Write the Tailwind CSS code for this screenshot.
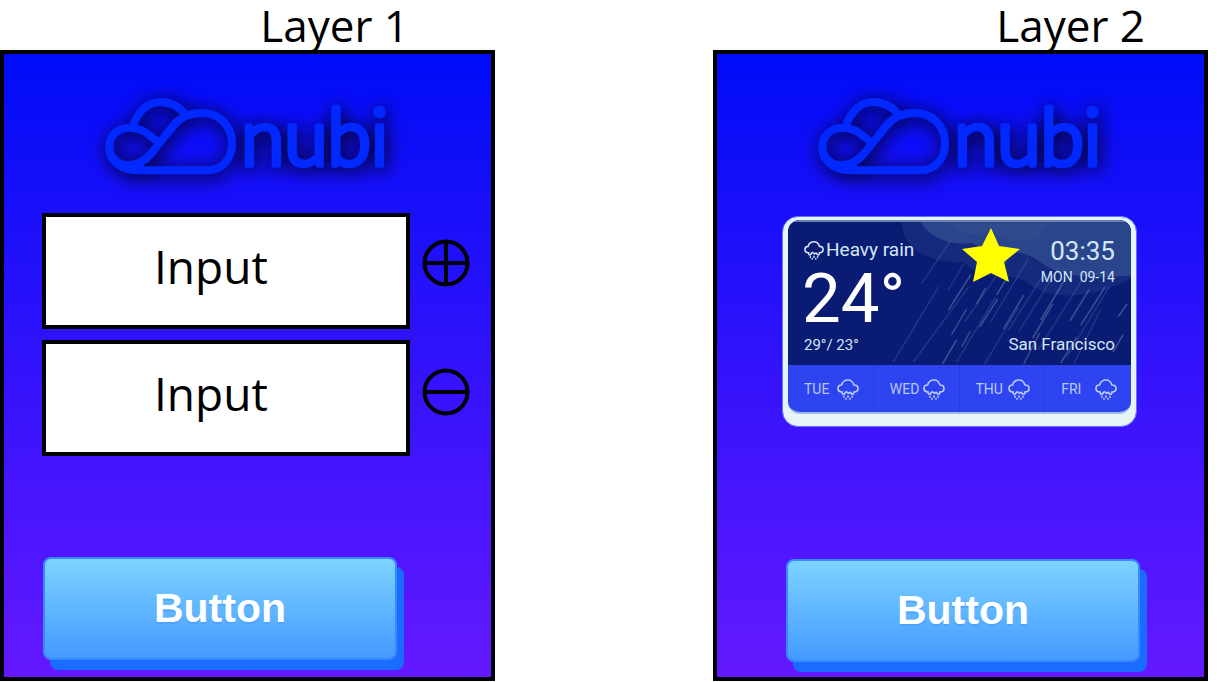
<!DOCTYPE html>
<html lang="en">
<head>
<meta charset="utf-8">
<meta name="viewport" content="width=device-width, initial-scale=1">
<title>nubi</title>
<script src="https://cdn.jsdelivr.net/npm/@tailwindcss/browser@4"></script>
</head>
<body class="bg-white text-black font-['Open_Sans',sans-serif]">
<svg class="hidden" aria-hidden="true">
  <defs>
    <symbol id="logo" viewBox="-7 0 960 330">
      <g fill="none" stroke="#0028ff" stroke-width="24" stroke-linecap="round" stroke-linejoin="round">
        <path d="M150 271H350C398 271 425 235 425 190C425 138 387 99 335 99C297 99 270 112 250 136L188 214C168 240 146 256 115 256C82 256 57 232 57 200C57 167 83 143 118 143C156 143 174 164 200 184"/>
        <path d="M57 200C57 246 92 271 150 271"/>
        <path d="M100 262Q125 266 150 258"/>
        <path d="M128 136C145 91 174 66 210 66C244 66 266 80 284 102"/>
      </g>
      <text x="452" y="255" font-family="Lato, sans-serif" font-weight="300" font-size="236" fill="#0028ff" stroke="#0028ff" stroke-width="17" stroke-linejoin="round">nubi</text>
    </symbol>
    <symbol id="rain" viewBox="0 0 22 22">
      <g fill="none" stroke="currentColor" stroke-width="1.7" stroke-linecap="round">
        <path d="M5 14C2.500 14 1 12.500 1 10.500S2.500 7 4.500 7C5.500 3.500 8 2 11 2S16 4 17 7C19.500 7 21 8.500 21 10.500S19.500 14 17 14"/>
        <path d="M5 14C5 17 7 17 8 15C9 13 10 14 11 15C12 16 13 13 14 15C15 17 17 17 17 14M7 19V18.500M11 18V19M15 19V18.500M9 20.500V21M13 20.500V21"/>
      </g>
    </symbol>
  </defs>
</svg>
<main class="grid min-h-screen grid-cols-[minmax(0,495fr)_minmax(0,218fr)_minmax(0,495fr)] pr-[15px] pb-px">
  <section class="col-start-1 flex flex-col">
    <h2 class="pr-[86px] text-right text-[44px] leading-[50px]">Layer 1</h2>
    <div class="flex flex-1 flex-col border-4 border-black bg-linear-to-b/srgb from-[#000cf8] to-[#6419ff]">
      <svg class="mx-auto mt-[26px] h-[110px] w-[320px] drop-shadow-[2px_3px_9px_#000000]" role="img" aria-label="nubi"><use href="#logo"/></svg>
      <form class="mt-[23px] flex flex-col gap-[11px] pr-[21px] pl-[38px]">
        <div class="flex gap-3">
          <input aria-label="First input" value="Input" class="h-[116px] min-w-0 flex-1 border-4 border-black bg-white pb-[10px] pl-[108px] text-[46px]">
          <button type="button" aria-label="Add" class="mt-[26px] size-12 shrink-0">
            <svg viewBox="0 0 48 48" class="size-12 fill-none stroke-black stroke-4"><circle cx="24" cy="24" r="21.500"/><path d="M24 3V45M3 24H45"/></svg>
          </button>
        </div>
        <div class="flex gap-3">
          <input aria-label="Second input" value="Input" class="h-[116px] min-w-0 flex-1 border-4 border-black bg-white pb-[10px] pl-[108px] text-[46px]">
          <button type="button" aria-label="Remove" class="mt-[28px] size-12 shrink-0">
            <svg viewBox="0 0 48 48" class="size-12 fill-none stroke-black stroke-4"><circle cx="24" cy="24" r="21.500"/><path d="M3 24H45"/></svg>
          </button>
        </div>
      </form>
      <button type="button" class="mt-auto mr-[94px] mb-[17px] ml-[39px] h-[103px] rounded-lg border-2 border-[#378aff] bg-linear-to-b from-[#7dd3ff] to-[#4599ff] font-['Liberation_Sans',sans-serif] text-[41px] font-bold text-white shadow-[7px_10px_0_#1a6cff] text-shadow-[0_2px_0_#4da3ff]">Button</button>
    </div>
  </section>
  <section class="col-start-3 flex flex-col">
    <h2 class="pr-[63px] text-right text-[44px] leading-[50px]">Layer 2</h2>
    <div class="flex flex-1 flex-col border-4 border-black bg-linear-to-b/srgb from-[#000cf8] to-[#6419ff]">
      <svg class="mx-auto mt-[26px] h-[110px] w-[320px] drop-shadow-[2px_3px_9px_#000000]" role="img" aria-label="nubi"><use href="#logo"/></svg>
      <article class="mr-[67px] ml-[65px] mt-[26px] rounded-2xl border border-[#6470ff] bg-[#e5f5f7] px-[5px] pt-[3px] pb-3 font-['Roboto',sans-serif] text-[#d3e7f7]">
        <div class="overflow-hidden rounded-xl border-b-2 border-[#9eb8e5] bg-[#2d44f0]">
          <div class="relative h-[145px] overflow-hidden border-t-2 border-[#6782af] bg-[#0a1b73] px-4">
            <svg class="absolute inset-0 size-full" viewBox="0 0 342 143" preserveAspectRatio="none" aria-hidden="true">
              <path fill="#162a7d" d="M113 0C115 29 143 41 174 40C199 61 218 50 238 60C268 85 320 70 342 56V0Z"/>
              <path fill="#2b458c" d="M132 0C142 17 164 24 184 21C204 34 230 25 247 37C276 61 320 54 342 54V0Z"/>
              <path fill="#3b5595" opacity=".3" d="M158 0C168 13 186 15 202 8C211 18 233 22 250 16L260 0Z"/>
              <g stroke="#6384b5" stroke-width="1.500" fill="none">
                <path opacity=".25" d="M162 19L133 62M150 65L105 140M180 65L125 140M175 42L160 68M218 39L176 100M240 36L202 100M270 45L230 110M292 60L250 127M320 65L278 135M207 75L168 140M230 85L196 142M312 87L285 142M255 52L220 108"/>
                <path opacity=".5" d="M182 53L160 88M197 66L188 82M209 77L191 105M235 73L215 107M178 87L163 113M168 118L154 142M277 56L252 98M316 65L292 103M300 68L281 99M338 82L329 95M182 109L173 125M251 111L235 142M288 115L272 141M334 113L324 130M264 82L244 116M219 55L208 73"/>
              </g>
            </svg>
            <div class="relative flex justify-between">
              <div class="whitespace-nowrap">
                <p class="mt-4 flex items-center gap-[2px] text-[19px] leading-6"><svg class="size-5 shrink-0" aria-hidden="true"><use href="#rain"/></svg>Heavy rain</p>
                <p class="-ml-[2px] mt-[3px] text-[69px] leading-[68px] text-white">24°</p>
              </div>
              <svg class="mt-[6px] mr-[-26px] h-[54px] w-[58px]" viewBox="0 0 58 54" role="img" aria-label="Favorite"><path fill="#ffff00" d="M29 0L37 18L58 21L42 34L47 54L29 45L11 54L15 34L0 21L20 18Z"/></svg>
              <div class="text-right whitespace-nowrap">
                <p class="mt-[14px] text-[26px] leading-[30px]">03:35</p>
                <p class="mt-px text-sm leading-5">MON&nbsp; 09-14</p>
              </div>
            </div>
            <div class="relative mt-px flex items-baseline justify-between leading-5">
              <p class="text-[15px]">29°/ 23°</p>
              <p class="text-[17px]">San Francisco</p>
            </div>
          </div>
          <ul class="grid grid-cols-4 text-sm text-[#b9c9ff]">
            <li class="flex h-[47px] items-center justify-between border-r border-[#263ce3] pr-[14px] pl-4">TUE<svg class="size-[22px] shrink-0" aria-hidden="true"><use href="#rain"/></svg></li>
            <li class="flex h-[47px] items-center justify-between border-r border-[#263ce3] pr-[14px] pl-4">WED<svg class="size-[22px] shrink-0" aria-hidden="true"><use href="#rain"/></svg></li>
            <li class="flex h-[47px] items-center justify-between border-r border-[#263ce3] pr-[14px] pl-4">THU<svg class="size-[22px] shrink-0" aria-hidden="true"><use href="#rain"/></svg></li>
            <li class="flex h-[47px] items-center justify-between pr-[14px] pl-4">FRI<svg class="size-[22px] shrink-0" aria-hidden="true"><use href="#rain"/></svg></li>
          </ul>
        </div>
      </article>
      <button type="button" class="mt-auto mr-[64px] mb-[15px] ml-[69px] h-[103px] rounded-lg border-2 border-[#378aff] bg-linear-to-b from-[#7dd3ff] to-[#4599ff] font-['Liberation_Sans',sans-serif] text-[41px] font-bold text-white shadow-[7px_10px_0_#1a6cff] text-shadow-[0_2px_0_#4da3ff]">Button</button>
    </div>
  </section>
</main>
</body>
</html>
